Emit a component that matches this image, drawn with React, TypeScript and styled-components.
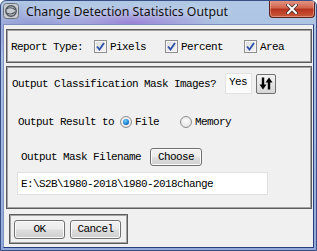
import React from 'react';
import styled, { createGlobalStyle } from 'styled-components';

const GlobalStyle = createGlobalStyle`
    html, body {
        margin: 0;
        padding: 0;
        background: #fff;
    }
`;

const Win = styled.div`
    width: 317px;
    height: 251px;
    box-sizing: border-box;
    display: flex;
    flex-direction: column;
    background:
        radial-gradient(ellipse 90px 18px at 130px 22px, rgba(150, 110, 210, 0.75), rgba(150, 110, 210, 0) 100%),
        radial-gradient(ellipse 60px 30px at 30px 30px, rgba(120, 110, 200, 0.6), rgba(120, 110, 200, 0) 100%),
        linear-gradient(180deg, #b0c8e4 0%, #a2bbdf 40%, #92aad9 100%);
    border: 1px solid #3a4f86;
    border-radius: 6px 6px 0 0;
    overflow: hidden;
`;

const TitleBar = styled.div`
    height: 23px;
    display: flex;
    align-items: flex-start;
    flex-shrink: 0;
`;

const AppIcon = styled.div`
    width: 16px;
    height: 16px;
    margin: 2px 0 0 2px;
`;

const Title = styled.div`
    margin: 3px 0 0 7px;
    font-family: "Noto Sans", "Open Sans", sans-serif;
    font-size: 12.3px;
    line-height: 16px;
    color: #111;
    text-shadow: 0 0 6px rgba(255, 255, 255, 0.8);
    white-space: nowrap;
`;

const CloseBtn = styled.div`
    margin-left: auto;
    margin-right: 1px;
    margin-top: -1px;
    width: 46px;
    height: 18px;
    box-sizing: border-box;
    border: 1px solid #5a2320;
    border-top: none;
    border-radius: 0 0 4px 4px;
    background: linear-gradient(180deg, #e49a8a 0%, #d2664f 45%, #b8321d 55%, #c95a3c 100%);
    box-shadow: inset 0 0 0 1px rgba(255, 200, 190, 0.45);
    display: flex;
    align-items: center;
    justify-content: center;
`;

const Client = styled.div`
    flex: 1;
    margin: 0 2px 2px 2px;
    background: #f0f0f0;
    padding: 4px 0 0 2px;
    display: flex;
    flex-direction: column;
    border: 1px solid #4a5f96;
    border-color: #7d90c0 #2a3d80 #2a3d80 #7d90c0;
`;

const Frame = styled.div<{ $w: number; $h: number }>`
    width: ${p => p.$w}px;
    height: ${p => p.$h}px;
    box-sizing: border-box;
    border: 1px solid #5c5c5c;
    box-shadow: inset 0 0 0 1px #a3a3a3;
    font-family: "Liberation Mono", "DejaVu Sans Mono", monospace;
    font-size: 11px;
    letter-spacing: -0.6px;
    color: #000;
`;

const ReportFrame = styled(Frame)`
    display: flex;
    align-items: center;
    padding: 1px 0 0 4px;
`;

const MainFrame = styled(Frame)`
    margin-top: 3px;
    display: flex;
    flex-direction: column;
    padding: 6px 0 0 5px;
`;

const ButtonFrame = styled(Frame)`
    margin: 5px 0 0 3px;
    display: flex;
    align-items: center;
    gap: 5px;
    padding: 0 0 0 4px;
`;

const Label = styled.span<{ $ml?: number }>`
    margin-left: ${p => p.$ml ?? 0}px;
    white-space: nowrap;
`;

const CheckItem = styled.label<{ $ml: number }>`
    display: flex;
    align-items: center;
    gap: 3px;
    margin-left: ${p => p.$ml}px;
`;

const CheckBox = styled.span`
    width: 13px;
    height: 13px;
    box-sizing: border-box;
    border: 1px solid #8f8f8f;
    background: linear-gradient(135deg, #dcdcdc 0%, #f4f4f4 100%);
    box-shadow: inset 0 0 0 1px #f7f7f7;
    display: flex;
    align-items: center;
    justify-content: center;
`;

const Row = styled.div<{ $mt: number; $ml?: number }>`
    display: flex;
    align-items: center;
    margin-top: ${p => p.$mt}px;
    margin-left: ${p => p.$ml ?? 0}px;
`;

const YesField = styled.div`
    width: 27px;
    height: 21px;
    box-sizing: border-box;
    margin-left: 9px;
    border: 1px solid #e2e2e2;
    background: #fbfbfb;
    padding: 2px 0 0 3px;
`;

const ToggleBtn = styled.div`
    width: 20px;
    height: 20px;
    box-sizing: border-box;
    margin-left: 4px;
    border: 1px solid #707070;
    border-radius: 2px;
    background: linear-gradient(180deg, #f2f2f2 0%, #e6e6e6 50%, #d6d6d6 100%);
    display: flex;
    align-items: center;
    justify-content: center;
`;

const RadioItem = styled.label<{ $ml: number }>`
    display: flex;
    align-items: center;
    gap: 3px;
    margin-left: ${p => p.$ml}px;
`;

const Radio = styled.span<{ $on?: boolean }>`
    width: 12px;
    height: 12px;
    box-sizing: border-box;
    border-radius: 50%;
    border: 1px solid #8d8d8d;
    background: radial-gradient(circle at 50% 40%, #fdfdfd 0%, #dcdcdc 100%);
    display: flex;
    align-items: center;
    justify-content: center;
    &::after {
        content: '';
        display: ${p => (p.$on ? 'block' : 'none')};
        width: 6px;
        height: 6px;
        border-radius: 50%;
        background: radial-gradient(circle at 40% 35%, #7ad0ff 0%, #1a7fd0 55%, #0a4f96 100%);
    }
`;

const PushButton = styled.div<{ $w: number; $h: number }>`
    width: ${p => p.$w}px;
    height: ${p => p.$h}px;
    box-sizing: border-box;
    border: 1px solid #707070;
    border-radius: 3px;
    background: linear-gradient(180deg, #f2f2f2 0%, #ebebeb 45%, #dddddd 55%, #cfcfcf 100%);
    box-shadow: inset 0 0 0 1px #fbfbfb;
    display: flex;
    align-items: center;
    justify-content: center;
    font-family: "Liberation Mono", "DejaVu Sans Mono", monospace;
    font-size: 11px;
    letter-spacing: -0.6px;
    color: #000;
`;

const PathField = styled.div`
    width: 251px;
    height: 23px;
    box-sizing: border-box;
    margin: 6px 0 0 5px;
    border: 1px solid #e0e0e0;
    background: #fff;
    display: flex;
    align-items: center;
    padding: 0 0 0 3px;
    white-space: nowrap;
`;

const Check = () => (
    <svg width="9" height="9" viewBox="0 0 9 9">
        <path d="M1 4.5 L3.5 7.5 L8 1" fill="none" stroke="#2a4fa8" strokeWidth="1.8" />
    </svg>
);

function App() {
    return (
        <>
            <GlobalStyle />
            <Win>
                <TitleBar>
                    <AppIcon>
                        <svg width="16" height="16" viewBox="0 0 16 16">
                            <rect x="0.5" y="0.5" width="15" height="15" rx="3" fill="#c8ccd0" stroke="#6c7278" />
                            <circle cx="8" cy="8" r="5.2" fill="none" stroke="#4f565e" strokeWidth="1.4" />
                            <path d="M3.5 6 Q8 3 12.5 7" fill="none" stroke="#4f565e" strokeWidth="1.1" />
                            <path d="M4 10 Q8 12.5 12 9" fill="none" stroke="#4f565e" strokeWidth="1.1" />
                        </svg>
                    </AppIcon>
                    <Title>Change Detection Statistics Output</Title>
                    <CloseBtn>
                        <svg width="12" height="10" viewBox="0 0 12 10">
                            <path d="M2 1 L10 9 M10 1 L2 9" stroke="#3a2a2a" strokeWidth="3.4" strokeLinecap="square" />
                            <path d="M2 1 L10 9 M10 1 L2 9" stroke="#fff" strokeWidth="2" strokeLinecap="square" />
                        </svg>
                    </CloseBtn>
                </TitleBar>
                <Client>
                    <ReportFrame $w={306} $h={34}>
                        <Label>Report Type:</Label>
                        <CheckItem $ml={11}><CheckBox><Check /></CheckBox>Pixels</CheckItem>
                        <CheckItem $ml={19}><CheckBox><Check /></CheckBox>Percent</CheckItem>
                        <CheckItem $ml={21}><CheckBox><Check /></CheckBox>Area</CheckItem>
                    </ReportFrame>
                    <MainFrame $w={306} $h={143}>
                        <Row $mt={0}>
                            <Label>Output Classification Mask Images?</Label>
                            <YesField>Yes</YesField>
                            <ToggleBtn>
                                <svg width="14" height="13" viewBox="0 0 14 13">
                                    <path d="M4 0.5 V9" stroke="#000" strokeWidth="2.4" />
                                    <path d="M0.5 7.5 L4 12.5 L7.5 7.5 Z" fill="#000" />
                                    <path d="M10 12.5 V4" stroke="#000" strokeWidth="2.4" />
                                    <path d="M6.5 5.5 L10 0.5 L13.5 5.5 Z" fill="#000" />
                                </svg>
                            </ToggleBtn>
                        </Row>
                        <Row $mt={22} $ml={6}>
                            <Label>Output Result to</Label>
                            <RadioItem $ml={6}><Radio $on />File</RadioItem>
                            <RadioItem $ml={21}><Radio />Memory</RadioItem>
                        </Row>
                        <Row $mt={20} $ml={9}>
                            <Label>Output Mask Filename</Label>
                            <PushButton $w={52} $h={18} style={{ marginLeft: 9 }}>Choose</PushButton>
                        </Row>
                        <PathField>E:\S2B\1980-2018\1980-2018change</PathField>
                    </MainFrame>
                    <ButtonFrame $w={119} $h={30}>
                        <PushButton $w={51} $h={19}>OK</PushButton>
                        <PushButton $w={51} $h={19}>Cancel</PushButton>
                    </ButtonFrame>
                </Client>
            </Win>
        </>
    );
}

export default App;
